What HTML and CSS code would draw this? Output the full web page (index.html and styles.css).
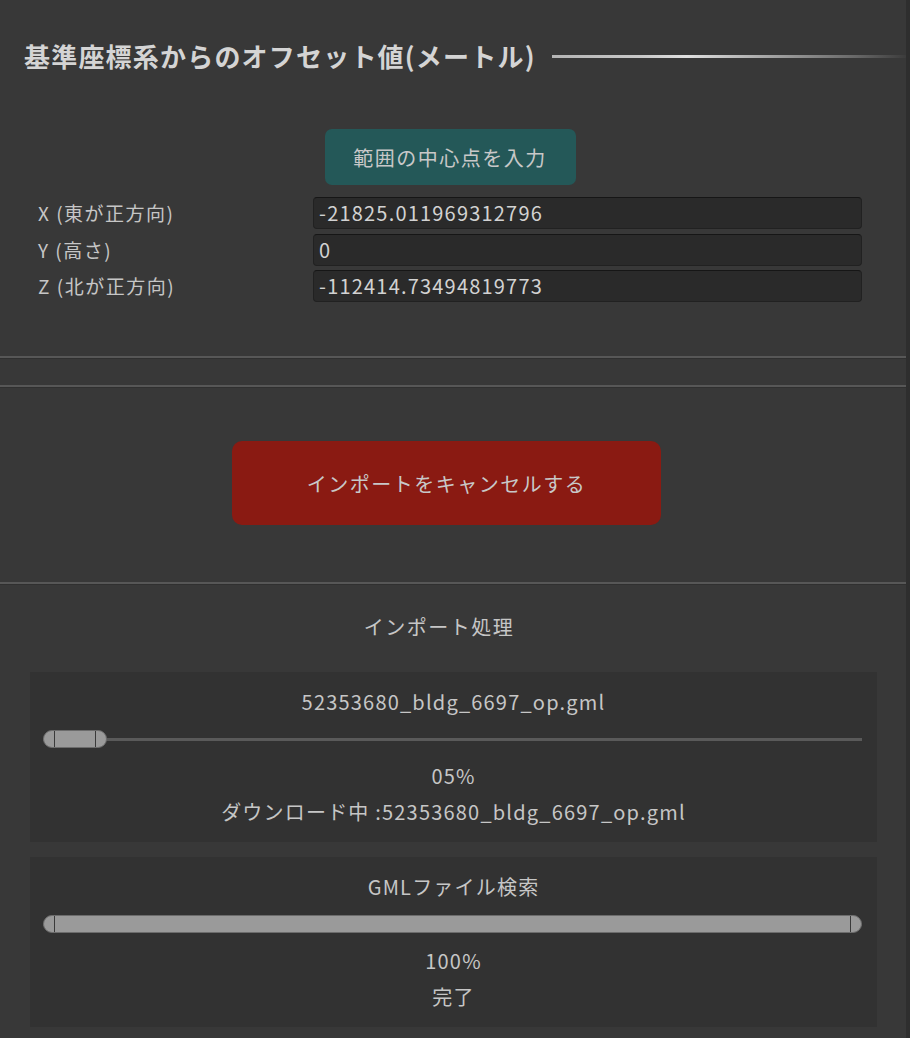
FILE: index.html
```html
<!DOCTYPE html>
<html lang="ja">

<head>
    <meta charset="UTF-8">
    <title>インポート設定</title>
    <link rel="stylesheet" href="styles.css">
</head>

<body>
    <div class="window">
        <div class="section-header">
            <span class="section-title">基準座標系からのオフセット値(メートル)</span>
            <span class="section-line"></span>
        </div>

        <div class="center-row">
            <button class="btn btn-teal">範囲の中心点を入力</button>
        </div>

        <div class="fields">
            <label class="field-label">X (東が正方向)</label>
            <div class="field-input">-21825.011969312796</div>
            <label class="field-label">Y (高さ)</label>
            <div class="field-input">0</div>
            <label class="field-label">Z (北が正方向)</label>
            <div class="field-input">-112414.73494819773</div>
        </div>

        <div class="separator sep-first"></div>
        <div class="separator sep-second"></div>

        <div class="center-row cancel-row">
            <button class="btn btn-red">インポートをキャンセルする</button>
        </div>

        <div class="separator"></div>

        <div class="progress-title">インポート処理</div>

        <div class="task">
            <div class="task-line">52353680_bldg_6697_op.gml</div>
            <div class="progress">
                <div class="progress-fill" style="width: 7.8%"></div>
            </div>
            <div class="task-line">05%</div>
            <div class="task-line">ダウンロード中 :52353680_bldg_6697_op.gml</div>
        </div>

        <div class="task">
            <div class="task-line">GMLファイル検索</div>
            <div class="progress">
                <div class="progress-fill" style="width: 100%"></div>
            </div>
            <div class="task-line">100%</div>
            <div class="task-line">完了</div>
        </div>
    </div>
</body>

</html>
```

FILE: styles.css
```css
body {
    margin: 0;
    background: #383838;
    color: #c6c6c6;
    font-family: "Noto Sans CJK JP", "Noto Sans", sans-serif;
    font-size: 20px;
    letter-spacing: 1.5px;
}

.window {
    width: 906px;
    min-height: 1038px;
    border-right: 4px solid #2e2e2e;
    box-sizing: content-box;
}

.section-header {
    display: flex;
    align-items: center;
    gap: 16px;
    padding: 40px 0 0 24px;
    height: 32px;
}

.section-title {
    font-size: 26px;
    line-height: 32px;
    font-weight: bold;
    letter-spacing: 1.2px;
    color: #d4d4d4;
    white-space: nowrap;
}

.section-line {
    flex: 1;
    height: 3px;
    background: linear-gradient(to right, #b4b4b4, #c8c8c8 25%, #e0e0e0 38%, #a8a8a8 60%, #6a6a6a 85%, #3c3c3c);
}

.center-row {
    display: flex;
    justify-content: center;
}

.btn {
    font-family: inherit;
    letter-spacing: inherit;
    color: #c8c8c8;
    border: none;
    cursor: pointer;
}

.btn-teal {
    margin-top: 57px;
    width: 251px;
    height: 56px;
    font-size: 20px;
    background: #245858;
    border-radius: 7px;
    margin-right: 6px;
}

.fields {
    display: grid;
    grid-template-columns: 275px 1fr;
    row-gap: 4.5px;
    padding: 12px 44px 0 38px;
}

.field-label {
    line-height: 32px;
    font-size: 19px;
}

.field-input {
    height: 30px;
    line-height: 30px;
    padding-left: 5px;
    background: #2a2a2a;
    border: 1px solid #212121;
    border-top-color: #161616;
    border-radius: 4px;
    font-size: 20px;
    letter-spacing: 1.2px;
    color: #d2d2d2;
}

.separator {
    height: 2px;
    background: #575757;
    border-bottom: 1px solid #303030;
    margin-top: 54px;
}

.sep-second {
    margin-top: 26px;
}

.cancel-row {
    margin-top: 53px;
    margin-bottom: 57px;
}

.btn-red {
    width: 429px;
    height: 84px;
    font-size: 20px;
    background: #8a1a12;
    border-radius: 10px;
    margin-right: 13px;
}

.progress-title {
    text-align: center;
    line-height: 36px;
    margin: 24px 28px 27px 0;
}

.task {
    margin: 0 29px 15px 30px;
    padding: 12px 13px;
    background: #323232;
    letter-spacing: 1.2px;
}

.task-line {
    text-align: center;
    line-height: 36px;
}

.progress {
    height: 38px;
    display: flex;
    align-items: center;
    background: linear-gradient(#5a5a5a, #5a5a5a) center / 100% 3px no-repeat;
    margin-right: 2px;
}

.progress-fill {
    height: 18px;
    box-sizing: border-box;
    border: 1px solid #6c6c6c;
    border-radius: 9px;
    background:
        linear-gradient(#3a3a3a, #3a3a3a) 10px 0 / 1px 100% no-repeat,
        linear-gradient(#3a3a3a, #3a3a3a) right 10px top 0 / 1px 100% no-repeat,
        #9a9a9a;
}
```
